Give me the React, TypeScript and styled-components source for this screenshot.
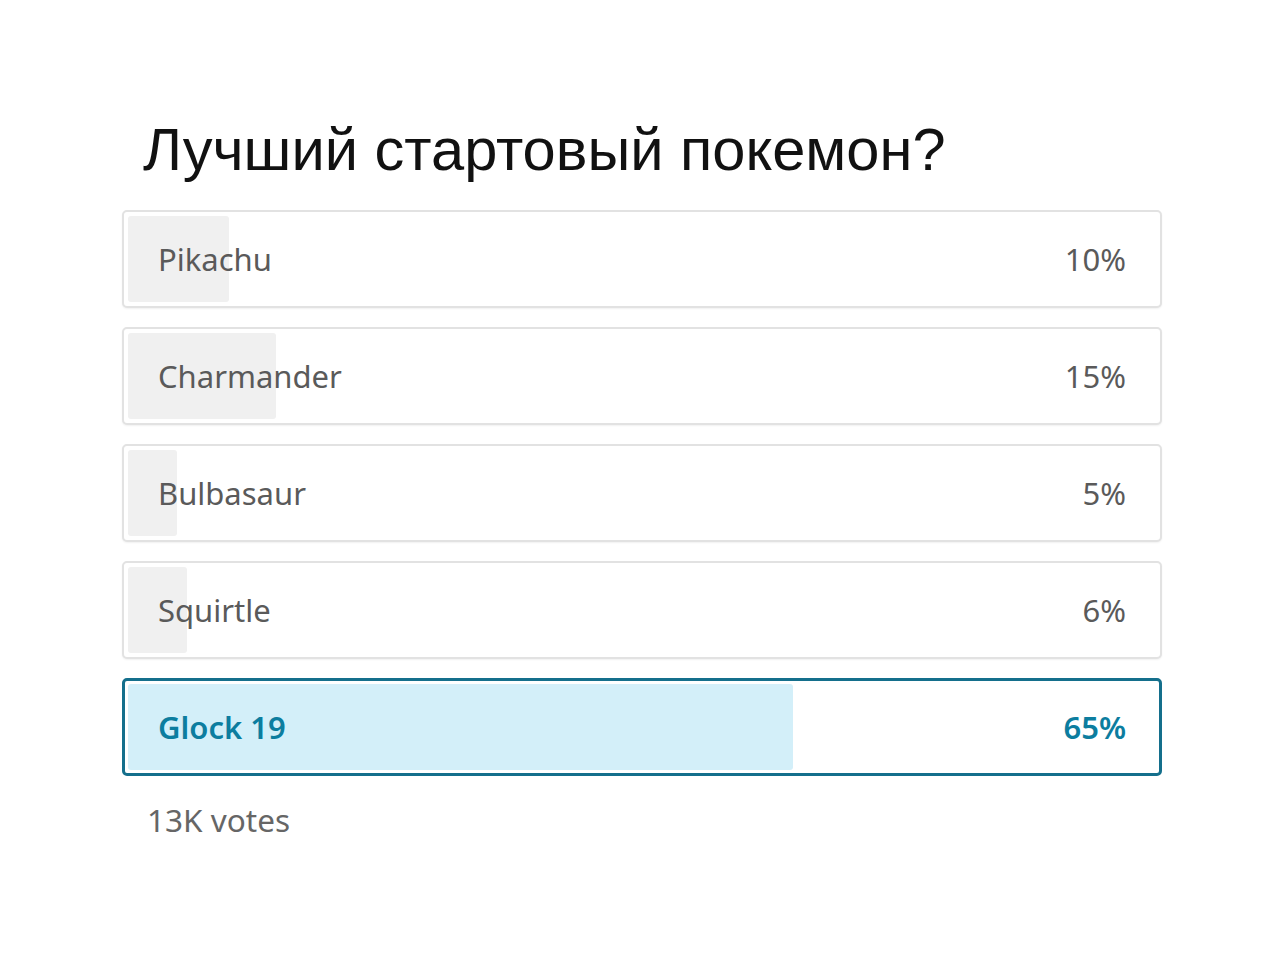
import styled, { createGlobalStyle } from 'styled-components';

const GlobalStyle = createGlobalStyle`
  body {
    margin: 0;
    background: #fff;
    font-family: "Noto Sans", "Open Sans", sans-serif;
  }
`;

const Page = styled.div`
  width: 1280px;
  height: 969px;
  background: #fff;
  box-sizing: border-box;
  padding: 115px 118px 0 122px;
`;

const Title = styled.h1`
  margin: 0 0 25px 21px;
  font-family: "Liberation Sans", Arial, sans-serif;
  font-weight: 400;
  font-size: 59.6px;
  line-height: 70px;
  color: #111;
`;

const Options = styled.div`
  display: flex;
  flex-direction: column;
  gap: 19px;
`;

const Option = styled.div<{ $selected?: boolean }>`
  position: relative;
  height: 98px;
  box-sizing: border-box;
  border: ${(p) => (p.$selected ? '3px solid #146f8c' : '2px solid #e2e2e2')};
  border-radius: 5px;
  padding: ${(p) => (p.$selected ? '3px' : '4px')};
  background: #fff;
  box-shadow: ${(p) => (p.$selected ? 'none' : '0 1px 2px rgba(0,0,0,0.06)')};
`;

const Track = styled.div`
  position: relative;
  height: 100%;
  display: flex;
  align-items: center;
  justify-content: space-between;
  padding: 0 30px;
`;

const Fill = styled.div<{ $selected?: boolean }>`
  position: absolute;
  left: 0;
  top: 0;
  bottom: 0;
  border-radius: 3px;
  background: ${(p) => (p.$selected ? '#d3eff9' : '#f0f0f0')};
`;

const Label = styled.span<{ $selected?: boolean }>`
  position: relative;
  font-size: 31px;
  font-weight: ${(p) => (p.$selected ? 600 : 400)};
  color: ${(p) => (p.$selected ? '#0c7d9f' : '#5a5a5a')};
`;

const Votes = styled.div`
  margin: 22px 0 0 25px;
  font-size: 31.5px;
  color: #666;
`;

const data = [
  { name: 'Pikachu', pct: 10, fill: 9.8 },
  { name: 'Charmander', pct: 15, fill: 14.4 },
  { name: 'Bulbasaur', pct: 5, fill: 4.8 },
  { name: 'Squirtle', pct: 6, fill: 5.7 },
  { name: 'Glock 19', pct: 65, fill: 64.7, selected: true },
];

export default function App() {
  return (
    <>
      <GlobalStyle />
      <Page>
        <Title>Лучший стартовый покемон?</Title>
        <Options>
          {data.map((d) => (
            <Option key={d.name} $selected={d.selected}>
              <Track>
                <Fill $selected={d.selected} style={{ width: `${d.fill}%` }} />
                <Label $selected={d.selected}>{d.name}</Label>
                <Label $selected={d.selected}>{d.pct}%</Label>
              </Track>
            </Option>
          ))}
        </Options>
        <Votes>13K votes</Votes>
      </Page>
    </>
  );
}
